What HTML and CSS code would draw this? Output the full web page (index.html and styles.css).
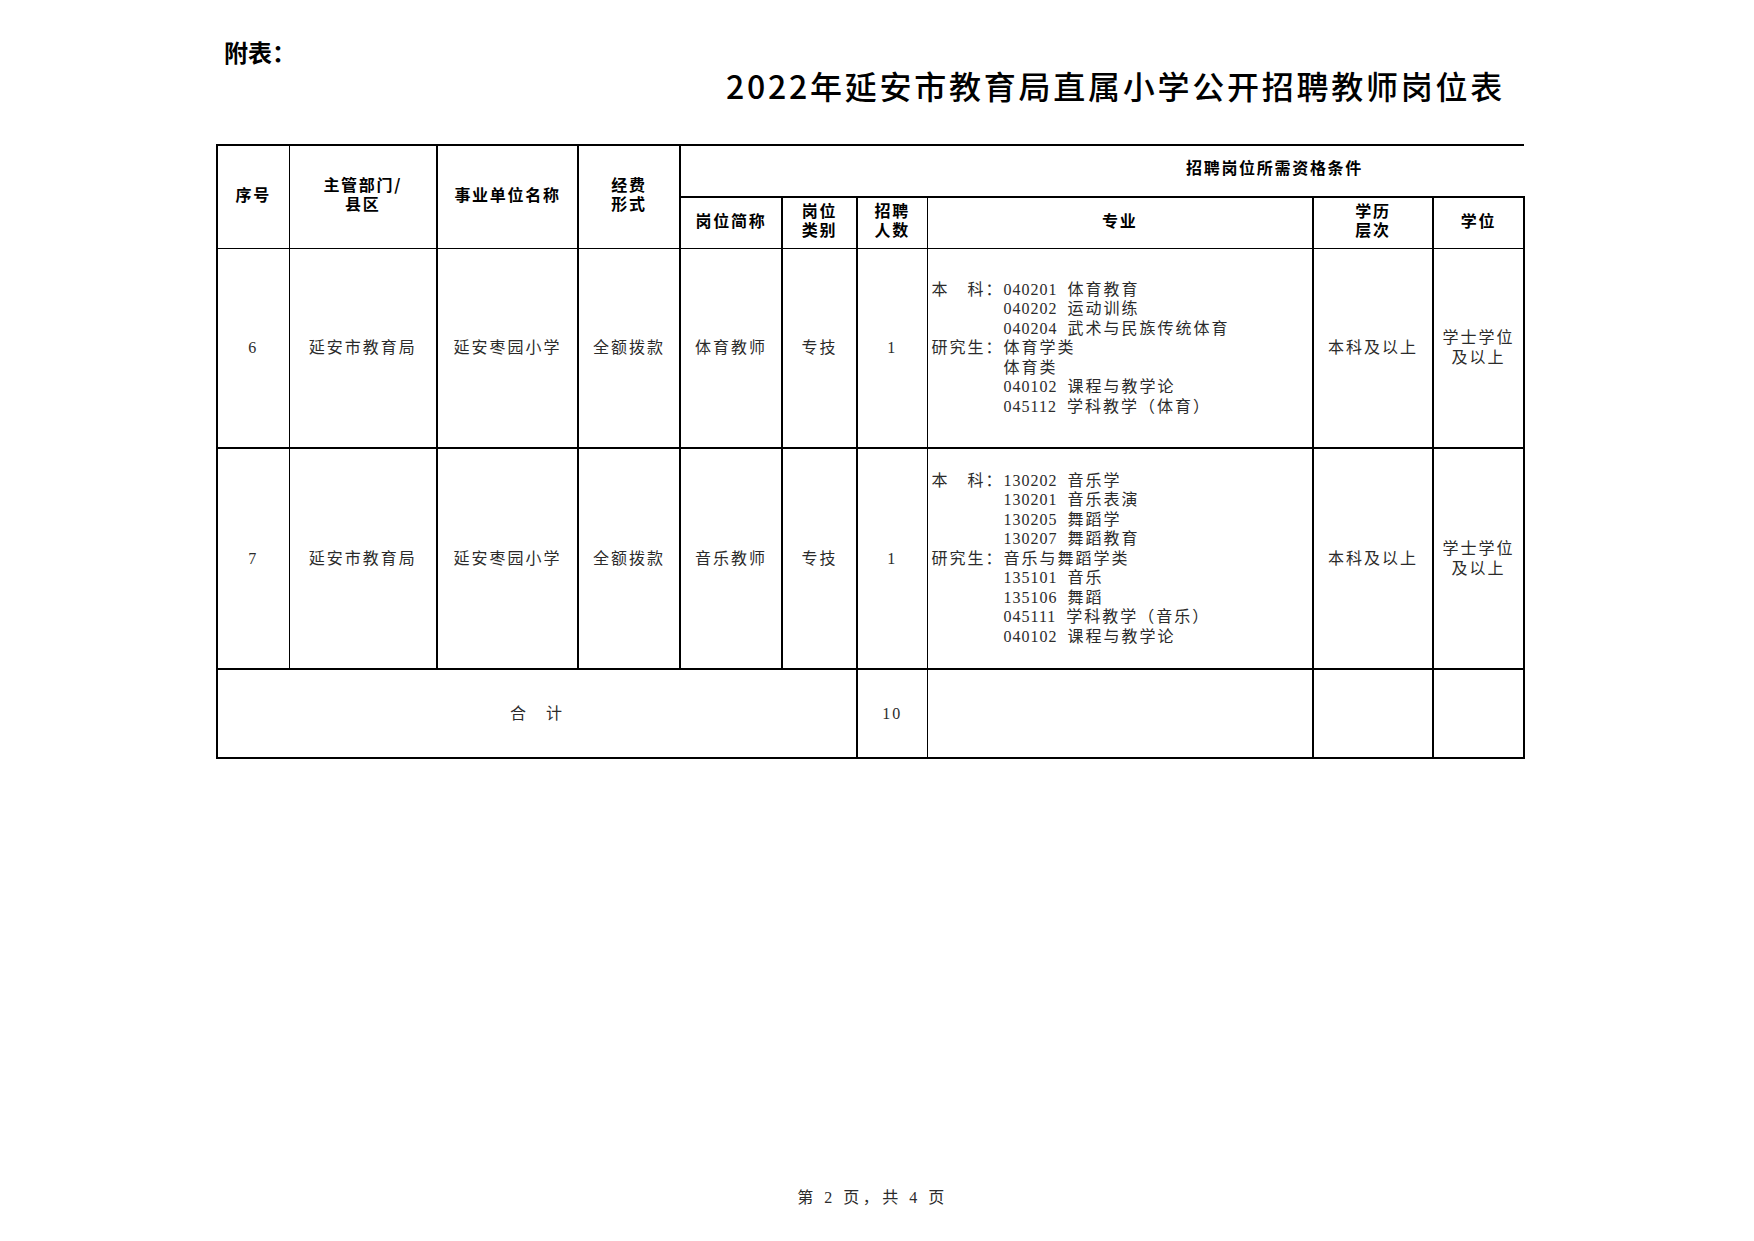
FILE: index.html
```html
<!DOCTYPE html>
<html lang="zh-CN">
<head>
<meta charset="utf-8">
<title>2022年延安市教育局直属小学公开招聘教师岗位表</title>
<link rel="stylesheet" href="styles.css">
</head>
<body>
<div class="page">
  <div class="attach">附表：</div>
  <h1 class="title">2022年延安市教育局直属小学公开招聘教师岗位表</h1>
  <table class="jobs">
    <colgroup>
      <col class="c-no">
      <col class="c-dept">
      <col class="c-unit">
      <col class="c-fund">
      <col class="c-post">
      <col class="c-type">
      <col class="c-num">
      <col class="c-major">
      <col class="c-edu">
      <col class="c-degree">
    </colgroup>
    <thead>
      <tr class="hrow-1">
        <th rowspan="2" class="thin-r thin-b">序号</th>
        <th rowspan="2" class="thin-l thin-b"><span class="hl">主管部门/</span><span class="hl">县区</span></th>
        <th rowspan="2" class="thin-b">事业单位名称</th>
        <th rowspan="2" class="thin-b"><span class="hl">经费</span><span class="hl">形式</span></th>
        <th colspan="6" class="group">招聘岗位所需资格条件</th>
      </tr>
      <tr class="hrow-2">
        <th class="thin-b">岗位简称</th>
        <th class="thin-b"><span class="hl">岗位</span><span class="hl">类别</span></th>
        <th class="thin-b thin-r"><span class="hl">招聘</span><span class="hl">人数</span></th>
        <th class="thin-b thin-l">专业</th>
        <th class="thin-b"><span class="hl">学历</span><span class="hl">层次</span></th>
        <th class="thin-b">学位</th>
      </tr>
    </thead>
    <tbody>
      <tr class="row-6">
        <td class="thin-r thin-t">6</td>
        <td class="thin-l thin-t">延安市教育局</td>
        <td class="thin-t">延安枣园小学</td>
        <td class="thin-t">全额拨款</td>
        <td class="thin-t">体育教师</td>
        <td class="thin-t">专技</td>
        <td class="thin-t thin-r">1</td>
        <td class="thin-t thin-l major">
          <div class="spec">
            <div class="ln"><span class="lbl">本　科：</span><span class="code">040201</span>&ensp;体育教育</div>
            <div class="ln ind"><span class="code">040202</span>&ensp;运动训练</div>
            <div class="ln ind"><span class="code">040204</span>&ensp;武术与民族传统体育</div>
            <div class="ln"><span class="lbl">研究生：</span>体育学类</div>
            <div class="ln ind">体育类</div>
            <div class="ln ind"><span class="code">040102</span>&ensp;课程与教学论</div>
            <div class="ln ind"><span class="code">045112</span>&ensp;学科教学（体育）</div>
          </div>
        </td>
        <td class="thin-t">本科及以上</td>
        <td class="thin-t">学士学位<br>及以上</td>
      </tr>
      <tr class="row-7">
        <td class="thin-r">7</td>
        <td class="thin-l">延安市教育局</td>
        <td>延安枣园小学</td>
        <td>全额拨款</td>
        <td>音乐教师</td>
        <td>专技</td>
        <td class="thin-r">1</td>
        <td class="thin-l major">
          <div class="spec">
            <div class="ln"><span class="lbl">本　科：</span><span class="code">130202</span>&ensp;音乐学</div>
            <div class="ln ind"><span class="code">130201</span>&ensp;音乐表演</div>
            <div class="ln ind"><span class="code">130205</span>&ensp;舞蹈学</div>
            <div class="ln ind"><span class="code">130207</span>&ensp;舞蹈教育</div>
            <div class="ln"><span class="lbl">研究生：</span>音乐与舞蹈学类</div>
            <div class="ln ind"><span class="code">135101</span>&ensp;音乐</div>
            <div class="ln ind"><span class="code">135106</span>&ensp;舞蹈</div>
            <div class="ln ind"><span class="code">045111</span>&ensp;学科教学（音乐）</div>
            <div class="ln ind"><span class="code">040102</span>&ensp;课程与教学论</div>
          </div>
        </td>
        <td>本科及以上</td>
        <td>学士学位<br>及以上</td>
      </tr>
      <tr class="row-sum">
        <td colspan="6">合　计</td>
        <td class="thin-r">10</td>
        <td class="thin-l"></td>
        <td></td>
        <td></td>
      </tr>
    </tbody>
  </table>
  <div class="footer">第 2 页，共 4 页</div>
</div>
</body>
</html>
```

FILE: styles.css
```css
html, body {
  margin: 0;
  padding: 0;
  background: #ffffff;
}

body {
  font-family: "Noto Sans CJK SC", sans-serif;
  color: #000000;
}

.page {
  width: 1754px;
  height: 1241px;
  box-sizing: border-box;
  padding: 38px 0 33px;
  display: flex;
  flex-direction: column;
  align-items: flex-start;
}

.attach {
  margin-left: 224px;
  font-size: 24px;
  line-height: 27px;
  font-weight: 700;
}

.title {
  margin: 0;
  padding-left: 726px;
  font-size: 32px;
  line-height: 40px;
  font-weight: 500;
  letter-spacing: 2.75px;
  white-space: nowrap;
}

.jobs {
  margin: 39px 0 0 216px;
  width: 1307px;
  border-collapse: collapse;
  table-layout: fixed;
}

.c-no { width: 72px; }
.c-dept { width: 148px; }
.c-unit { width: 141px; }
.c-fund { width: 102px; }
.c-post { width: 102px; }
.c-type { width: 75px; }
.c-num { width: 70px; }
.c-major { width: 386px; }
.c-edu { width: 120px; }
.c-degree { width: 91px; }

.jobs th,
.jobs td {
  border: 2px solid #000000;
  padding: 0;
  text-align: center;
  vertical-align: middle;
}

.jobs th {
  font-family: "Noto Sans CJK SC", sans-serif;
  font-size: 16px;
  line-height: 18.5px;
  font-weight: 700;
  letter-spacing: 1.7px;
  color: #000000;
  padding-bottom: 6px;
}

.jobs th .hl {
  display: block;
  height: 18.5px;
  line-height: 18.5px;
  overflow: visible;
}

.jobs td {
  font-family: "Liberation Serif", "Noto Sans CJK SC", serif;
  font-size: 16px;
  line-height: 19.5px;
  letter-spacing: 2px;
  color: #2b2b2b;
}

.jobs .thin-r { border-right-width: 1px; }
.jobs .thin-l { border-left-width: 1px; }
.jobs .thin-b { border-bottom-width: 1px; }
.jobs .thin-t { border-top-width: 1px; }

.jobs th.group {
  border-right: none;
  text-align: left;
  padding-left: 505px;
  padding-bottom: 8px;
}

.hrow-1 { height: 52px; }
.hrow-2 { height: 51px; }
.row-6 { height: 200px; }
.row-7 { height: 221px; }
.row-sum { height: 89px; }

.jobs td.major {
  text-align: left;
  padding-left: 4px;
}

.spec .ln {
  white-space: nowrap;
}

.spec .ind {
  padding-left: 72px;
}

.spec .lbl {
  display: inline-block;
  width: 72px;
}

.spec .code {
  letter-spacing: 1px;
}

.footer {
  margin-top: auto;
  align-self: stretch;
  text-align: center;
  padding-right: 9px;
  font-family: "Liberation Serif", "Noto Sans CJK SC", serif;
  font-size: 16px;
  line-height: 20px;
  letter-spacing: 3.5px;
  color: #2b2b2b;
}
```
